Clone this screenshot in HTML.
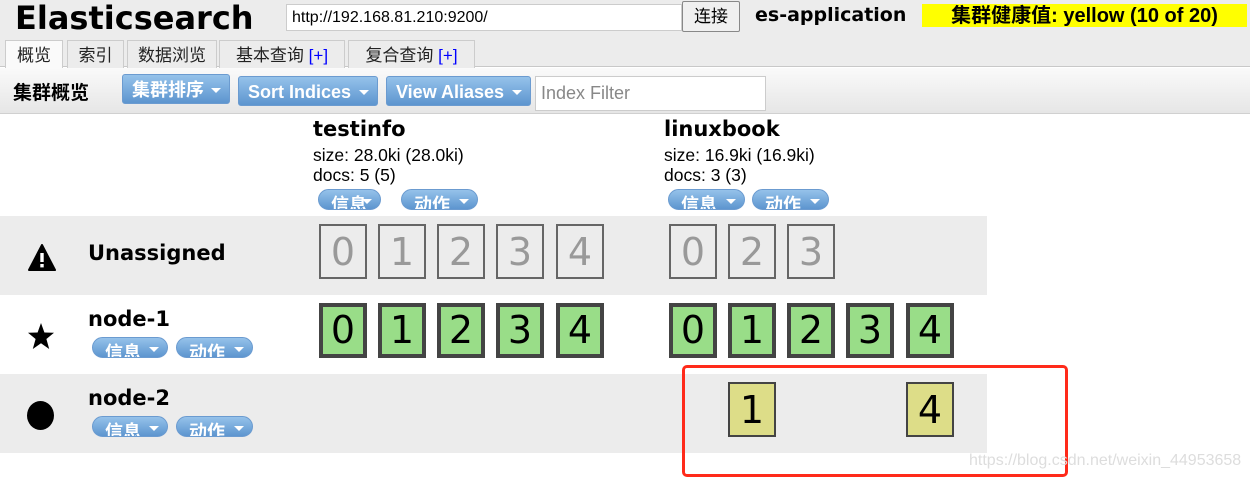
<!DOCTYPE html>
<html><head><meta charset="utf-8"><style>
*{margin:0;padding:0;box-sizing:border-box}
body{width:1250px;height:481px;position:relative;overflow:hidden;background:#fff;font-family:"DejaVu Sans","Liberation Sans","Noto Sans CJK SC",sans-serif;color:#000}
.a{position:absolute}
.cjk{font-family:"Liberation Sans","Noto Sans CJK SC",sans-serif}
.tab{position:absolute;top:40px;height:28px;border:1px solid #ccc;border-bottom:none;background:#ececec;font-size:17px;text-align:center;line-height:30px;font-family:"Liberation Sans","Noto Sans CJK SC",sans-serif;color:#222}
.tab b{font-weight:normal;color:#00f}
.btn{position:absolute;height:30px;border:1px solid #6b9bd0;border-radius:3px;background:linear-gradient(#95c2ea,#5d95cf);color:#fff;font-weight:bold;font-size:18px;line-height:30px;padding-left:9px;font-family:"Liberation Sans","Noto Sans CJK SC",sans-serif}
.btn:after,.pill:after{content:"";position:absolute;right:8px;top:13px;border:5px solid transparent;border-top:5px solid #fff;border-bottom:none}
.pill{position:absolute;height:21px;border:1px solid #6b9bd0;border-radius:11px;background:linear-gradient(#95c2ea,#5d95cf);color:#fff;font-weight:bold;font-size:18px;line-height:30px;padding-left:12px;overflow:hidden;font-family:"Liberation Sans","Noto Sans CJK SC",sans-serif}
.pill:after{top:9px}
.row{position:absolute;left:0;width:987px;height:79px;background:#ececec}
.sh{position:absolute;width:48px;height:55px;font-size:38px;text-align:center;line-height:52px;font-family:"DejaVu Sans",sans-serif}
.u{border:2px solid #666;color:#999;background:transparent}
.g{border:4px solid #444;background:#99dd88;line-height:47px}
.y{border:2px solid #444;background:#dddd88}
.name{position:absolute;font-weight:bold;font-size:21px;left:88px}
.idx{position:absolute;font-weight:bold;font-size:21px}
.info{position:absolute;font-size:17.5px;line-height:20px;font-family:"Liberation Sans",sans-serif}
</style></head><body>
<div class="a" style="left:0;top:0;width:1250px;height:67px;background:#ececec;border-bottom:1px solid #c8c8c8"></div>
<div class="a" style="left:15px;top:-1px;font-size:32px;font-weight:bold">Elasticsearch</div>
<div class="a" style="left:286px;top:4px;width:396px;height:27px;background:#fff;border:1px solid #ccc;font-family:'Liberation Sans',sans-serif;font-size:16px;line-height:25px;padding-left:5px">http://192.168.81.210:9200/</div>
<div class="a cjk" style="left:682px;top:1px;width:58px;height:31px;background:#f0f0f0;border:1px solid #888;border-radius:2px;font-size:17px;text-align:center;line-height:29px">连接</div>
<div class="a" style="left:755px;top:4px;font-weight:bold;font-size:19px">es-application</div>
<div class="a cjk" style="left:922px;top:4px;width:325px;height:23px;background:#ff0;font-weight:bold;font-size:20px;line-height:24px;text-align:center">集群健康值: yellow (10 of 20)</div>

<div class="tab" style="left:5px;width:58px;background:#fafafa;height:29px">概览</div>
<div class="tab" style="left:67px;width:57px">索引</div>
<div class="tab" style="left:127px;width:90px">数据浏览</div>
<div class="tab" style="left:219px;width:126px">基本查询 <b>[+]</b></div>
<div class="tab" style="left:348px;width:127px">复合查询 <b>[+]</b></div>

<div class="a" style="left:0;top:68px;width:1250px;height:46px;background:linear-gradient(#fafafa,#e6e6e6);border-bottom:1px solid #d0d0d0"></div>
<div class="a cjk" style="left:13px;top:78px;font-weight:bold;font-size:19px">集群概览</div>
<div class="btn" style="left:122px;top:74px;width:108px">集群排序</div>
<div class="btn" style="left:238px;top:76px;width:140px">Sort Indices</div>
<div class="btn" style="left:386px;top:76px;width:145px">View Aliases</div>
<div class="a" style="left:535px;top:76px;width:231px;height:35px;background:#fff;border:1px solid #ccc;font-family:'Liberation Sans',sans-serif;font-size:18px;color:#888;line-height:32px;padding-left:5px">Index Filter</div>

<div class="idx" style="left:313px;top:117px">testinfo</div>
<div class="info" style="left:313px;top:145px">size: 28.0ki (28.0ki)<br>docs: 5 (5)</div>
<div class="pill" style="left:318px;top:189px;width:63px">信息</div>
<div class="pill" style="left:401px;top:189px;width:77px">动作</div>
<div class="idx" style="left:664px;top:117px">linuxbook</div>
<div class="info" style="left:664px;top:145px">size: 16.9ki (16.9ki)<br>docs: 3 (3)</div>
<div class="pill" style="left:668px;top:189px;width:77px">信息</div>
<div class="pill" style="left:752px;top:189px;width:77px">动作</div>

<div class="row" style="top:216px"></div>
<div class="row" style="top:374px"></div>

<svg class="a" style="left:28px;top:244px" width="32" height="30" viewBox="0 0 32 30"><path d="M14 1 L27 26 L1 26 Z" fill="#000" stroke="#000" stroke-linejoin="round" stroke-width="2"/><rect x="12.3" y="9" width="3.4" height="9" fill="#fff"/><rect x="12.3" y="20" width="3.4" height="3.4" fill="#fff"/></svg>
<div class="name" style="top:241px">Unassigned</div>
<svg class="a" style="left:27px;top:322px" width="32" height="30" viewBox="0 0 32 30"><path d="M14 1 L17.4 10.5 L27 10.8 L19.4 17 L22.2 27 L14 21.2 L5.8 27 L8.6 17 L1 10.8 L10.6 10.5 Z" fill="#000"/></svg>
<div class="name" style="top:307px">node-1</div>
<div class="pill" style="left:92px;top:337px;width:76px">信息</div>
<div class="pill" style="left:176px;top:337px;width:77px">动作</div>
<div class="a" style="left:27px;top:401px;width:27px;height:29px;border-radius:50%;background:#000"></div>
<div class="name" style="top:386px">node-2</div>
<div class="pill" style="left:92px;top:416px;width:76px">信息</div>
<div class="pill" style="left:176px;top:416px;width:77px">动作</div>

<div class="sh u" style="left:319px;top:224px">0</div>
<div class="sh u" style="left:378px;top:224px">1</div>
<div class="sh u" style="left:437px;top:224px">2</div>
<div class="sh u" style="left:496px;top:224px">3</div>
<div class="sh u" style="left:556px;top:224px">4</div>
<div class="sh u" style="left:669px;top:224px">0</div>
<div class="sh u" style="left:728px;top:224px">2</div>
<div class="sh u" style="left:787px;top:224px">3</div>

<div class="sh g" style="left:319px;top:303px">0</div>
<div class="sh g" style="left:378px;top:303px">1</div>
<div class="sh g" style="left:437px;top:303px">2</div>
<div class="sh g" style="left:496px;top:303px">3</div>
<div class="sh g" style="left:556px;top:303px">4</div>
<div class="sh g" style="left:669px;top:303px">0</div>
<div class="sh g" style="left:728px;top:303px">1</div>
<div class="sh g" style="left:787px;top:303px">2</div>
<div class="sh g" style="left:846px;top:303px">3</div>
<div class="sh g" style="left:906px;top:303px">4</div>

<div class="sh y" style="left:728px;top:382px">1</div>
<div class="sh y" style="left:906px;top:382px">4</div>

<div class="a" style="left:682px;top:365px;width:386px;height:112px;border:3px solid #ff2a1a;border-radius:5px"></div>
<div class="a" style="left:969px;top:452px;font-family:'Liberation Sans',sans-serif;font-size:16px;color:#ddd">https://blog.csdn.net/weixin_44953658</div>
</body></html>
